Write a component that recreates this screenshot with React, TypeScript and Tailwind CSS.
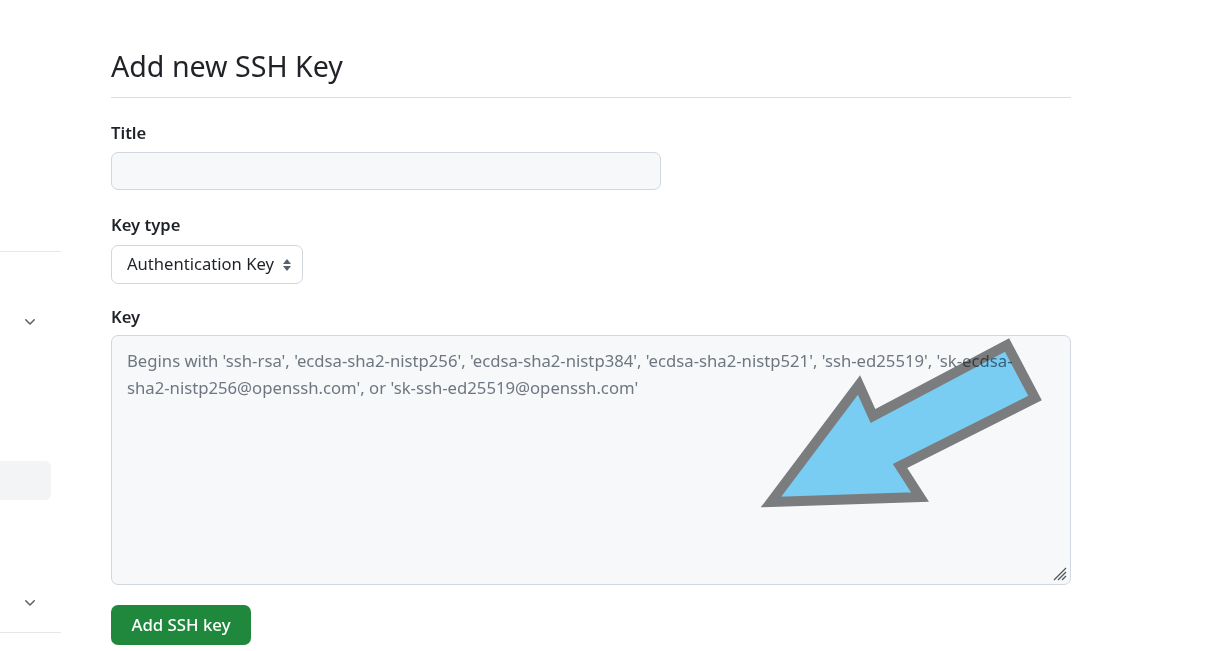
import React from "react";

const font = { fontFamily: '"Noto Sans", "Liberation Sans", sans-serif' };

function Chevron() {
  return (
    <svg width="16" height="16" viewBox="0 0 16 16" fill="#57606a">
      <path d="M12.78 5.22a.749.749 0 0 1 0 1.06l-4.25 4.25a.749.749 0 0 1-1.06 0L3.22 6.28a.749.749 0 1 1 1.06-1.06L8 8.939l3.72-3.719a.749.749 0 0 1 1.06 0Z" />
    </svg>
  );
}

export default function App() {
  return (
    <div className="relative w-[1222px] h-[651px] bg-white overflow-hidden text-[#1f2328]" style={font}>
      <div className="flex">
        {/* sidebar */}
        <div className="w-[61px] shrink-0 flex flex-col">
          <div className="h-[251px]" />
          <div className="h-px bg-[#e5e7eb]" />
          <div className="h-[62px]" />
          <div className="flex justify-end pr-[23px]"><Chevron /></div>
          <div className="h-[131px]" />
          <div className="w-[51px] h-[39px] rounded-r-[6px] bg-[#f3f4f6]" />
          <div className="h-[95px]" />
          <div className="flex justify-end pr-[23px]"><Chevron /></div>
          <div className="h-[21px]" />
          <div className="h-px bg-[#e5e7eb]" />
        </div>
        {/* main */}
        <div className="ml-[50px] w-[960px] flex flex-col">
          <h1 className="mt-[46px] text-[28.6px] leading-[40px] font-normal">Add new SSH Key</h1>
          <div className="mt-[11px] h-px bg-[#d8dee4]" />
          <label className="mt-[23px] text-[16.6px] leading-[24px] font-semibold">Title</label>
          <div className="mt-[7px] w-[550px] h-[38px] rounded-[7px] border border-[#d0d7de] bg-[#f6f8fa]" />
          <label className="mt-[23px] text-[16.6px] leading-[24px] font-semibold">Key type</label>
          <div className="mt-[8px] w-[192px] h-[39px] rounded-[7px] border border-[#d0d7de] bg-white flex items-center pl-[15px] pr-[10px] justify-between">
            <span className="text-[16.6px]">Authentication Key</span>
            <svg width="10" height="16" viewBox="0 0 10 16" fill="#57606a">
              <path d="M5 2 L9 7 H1 Z" />
              <path d="M5 14 L9 9 H1 Z" />
            </svg>
          </div>
          <label className="mt-[21px] text-[16.6px] leading-[24px] font-semibold">Key</label>
          <div className="relative mt-[6px] w-[960px] h-[250px] rounded-[7px] border border-[#d0d7de] bg-[#f6f8fa] px-[15px] pt-[11px] text-[16.7px] leading-[27px] text-[#6e7781]">
            <div className="whitespace-nowrap">Begins with 'ssh-rsa', 'ecdsa-sha2-nistp256', 'ecdsa-sha2-nistp384', 'ecdsa-sha2-nistp521', 'ssh-ed25519', 'sk-ecdsa-</div>
            <div className="whitespace-nowrap">sha2-nistp256@openssh.com', or 'sk-ssh-ed25519@openssh.com'</div>
            <svg className="absolute right-[3px] bottom-[3px]" width="14" height="14" viewBox="0 0 14 14" stroke="#555" strokeWidth="1.3">
              <line x1="13" y1="1" x2="1" y2="13" />
              <line x1="13" y1="5" x2="5" y2="13" />
              <line x1="13" y1="9" x2="9" y2="13" />
            </svg>
          </div>
          <div className="mt-[20px]">
            <button className="w-[140px] h-[40px] rounded-[7px] bg-[#1f883d] text-white text-[16.8px] font-medium">Add SSH key</button>
          </div>
        </div>
      </div>
      {/* arrow annotation overlay */}
      <svg className="absolute left-0 top-0 pointer-events-none mix-blend-multiply" width="1222" height="651">
        <polygon
          points="771,502 920,497 900,466 1035,398 1007,345 873,416 859,385"
          fill="#7dd3f8"
          stroke="#808080"
          strokeWidth="10"
          strokeLinejoin="miter"
        />
      </svg>
    </div>
  );
}
